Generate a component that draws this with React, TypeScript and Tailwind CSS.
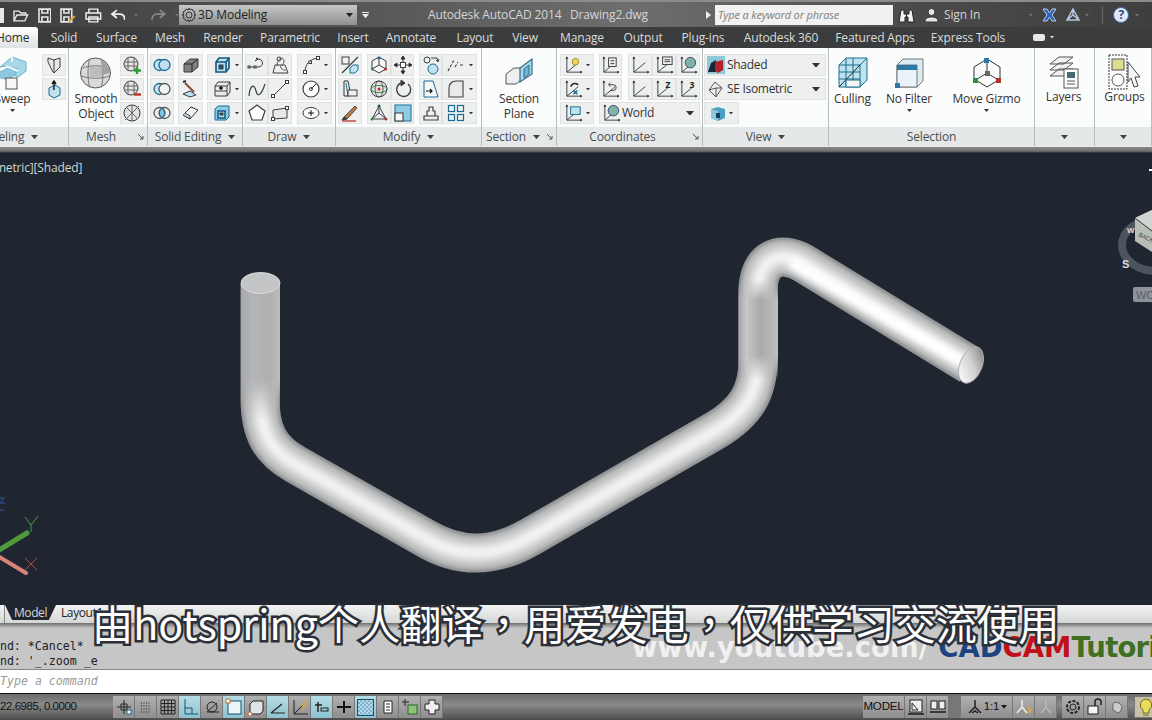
import React from 'react';

const Svg: React.FC<{ s?: number; w?: number; h?: number; vb?: string; children: React.ReactNode }> = ({ s = 20, w, h, vb = '0 0 20 20', children }) => (
  <svg width={w ?? s} height={h ?? s} viewBox={vb} fill="none" stroke="#3c3f42" strokeWidth={1} className="shrink-0">
    {children}
  </svg>
);

const blue = '#1b6a96';
const pale = '#bfe2ee';

// ribbon icons, small ones are 20x20 in their own box
const ic: Record<string, React.ReactNode> = {
  slice: <><path d="M4 3l6 2 6-2v9l-6 6-1-1-5-10z" fill="#e8e8e8" /><path d="M10 5v13" /></>,
  press: <><path d="M5 9l6-3 5 3v7l-6 3-5-3z" fill={pale} stroke={blue} /><path d="M10 11V2M8 5l2-3 2 3" stroke="#111" strokeWidth={1.4} /></>,
  meshAdd: <><ellipse cx="9" cy="9" rx="7" ry="7" fill="#e4e4e4" /><path d="M2 7h14M2 11h14M6 2v14M12 2v14" stroke="#666" /><path d="M15 12v7M12 15.500h7" stroke="#2d9b35" strokeWidth={2.4} /></>,
  meshSub: <><ellipse cx="9" cy="9" rx="7" ry="7" fill="#e4e4e4" /><path d="M2 7h14M2 11h14M6 2v14M12 2v14" stroke="#666" /><path d="M12 15.500h7" stroke="#b5312b" strokeWidth={2.4} /></>,
  meshCut: <><ellipse cx="10" cy="10" rx="8" ry="8" fill="#e2e2e2" /><path d="M3 17L17 3M5 5l10 10M10 2v16" stroke="#666" /></>,
  union: <><circle cx="7.500" cy="10" r="5.500" fill={pale} stroke={blue} strokeWidth={1.3} /><circle cx="12.500" cy="10" r="5.500" fill={pale} stroke={blue} strokeWidth={1.3} /></>,
  subtract: <><circle cx="7.500" cy="10" r="5.500" fill={pale} stroke={blue} strokeWidth={1.3} /><circle cx="12.500" cy="10" r="5.500" fill="#f3f5f5" stroke="#555" strokeWidth={1.3} /></>,
  intersect: <><circle cx="7.500" cy="10" r="5.500" stroke="#555" strokeWidth={1.3} /><circle cx="12.500" cy="10" r="5.500" stroke="#555" strokeWidth={1.3} /><path d="M10 5.400a5.500 5.500 0 010 9.200 5.500 5.500 0 010-9.200z" fill="#88c6dd" stroke={blue} /></>,
  boxGrey: <><path d="M3 9l6-5h8v8l-6 5H3z" fill="#7d7f80" /><path d="M3 9h8v8M11 9l6-5" stroke="#222" /></>,
  boxBlue: <><path d="M4 7l3-4h10v10l-3 4H4z" fill={pale} stroke="#12577f" strokeWidth={1.6} /><path d="M4 7h10v10M14 7l3-4" stroke="#12577f" strokeWidth={1.6} /><rect x="7" y="10" width="4" height="4" fill="#12577f" /></>,
  brush: <><path d="M2 15l7-3 6 4-6 2z" fill={pale} /><path d="M4 4l9 9" stroke="#8a4a32" strokeWidth={2} /><path d="M2 3l3-1" stroke="#333" strokeWidth={2} /></>,
  boxPlus: <><path d="M3 7l3-4h12v10l-3 4H3z" fill="#eaeaea" /><path d="M3 7h12v10M15 7l3-4M3 12h12" /><path d="M7 9h4M9 7v4" stroke="#111" strokeWidth={1.4} /></>,
  eraser: <><path d="M2 12l8-8 7 3-8 9z" fill="#f2f2f2" stroke="#333" /><path d="M2 12l7 4v-3l-5-3" fill={pale} /></>,
  boxInset: <><path d="M3 6l3-3h11v11l-3 3H3z" fill="#8ccde2" stroke={blue} /><rect x="6" y="8" width="7" height="7" fill={pale} stroke="#12577f" strokeWidth={1.5} /><rect x="8" y="10" width="3" height="2" fill="#12577f" /></>,
  spline2: <><path d="M2 12h5M11 4c6 0 6 8 0 8H9" /><rect x="1" y="11" width="2" height="2" /><rect x="7" y="11" width="2" height="2" /><path d="M8 6l3-2-2-1" stroke="#111" /></>,
  hatch: <><path d="M3 18l2-8h10l3 8z" fill="#eee" /><path d="M7 11c0-8 7-10 7-5s-5 4-3 7 5 2 5 2" stroke="#555" /><circle cx="9" cy="4" r="2" /></>,
  arc: <><path d="M4 17C4 9 9 4 17 3" /><rect x="2.500" y="15.500" width="3" height="3" fill="#fff" /><rect x="8" y="6" width="2.500" height="2.500" fill="#fff" /><rect x="15.500" y="1.500" width="3" height="3" fill="#fff" /></>,
  wave: <path d="M2 17C3 6 7 4 9 12s6 2 9-7" strokeWidth={1.2} />,
  line: <><path d="M3 17L17 3" /><rect x="1.500" y="15.500" width="3" height="3" fill="#fff" /><rect x="15.500" y="1.500" width="3" height="3" fill="#fff" /></>,
  circle: <><circle cx="10" cy="10" r="8" fill="#fdfdfd" strokeWidth={1.2} /><circle cx="10" cy="10" r="1.500" /><path d="M10 10l5-5" /></>,
  penta: <path d="M10 2l8 6-3 9H5L2 8z" fill="#fdfdfd" strokeWidth={1.2} />,
  rect: <><path d="M3 7l14-2v10l-14 1z" fill="#e8e8e8" /><rect x="15.500" y="3.500" width="3" height="3" fill="#fff" /><rect x="1.500" y="14.500" width="3" height="3" fill="#fff" /></>,
  ellipse: <><ellipse cx="10" cy="10" rx="8" ry="5.500" fill="#fdfdfd" /><path d="M7 10h6M10 7v6" stroke="#111" /></>,
  scale: <><rect x="2" y="2" width="7" height="7" fill="#f0f0f0" /><path d="M2 18L18 2" strokeWidth={1.2} /><path d="M10 13l3-3h5v5l-3 3h-5z" fill={pale} stroke={blue} /></>,
  gizmoBox: <><path d="M10 2l7 4v8l-7 4-7-4V6z" fill="#f5f5f5" /><path d="M10 10V2M10 10l-7 4M10 10l7 4" /><circle cx="10" cy="3" r="1.600" fill={blue} stroke="none" /><circle cx="3.500" cy="14" r="1.600" fill="#2d8f3c" stroke="none" /><circle cx="16.500" cy="14" r="1.600" fill="#b5312b" stroke="none" /></>,
  move: <><path d="M10 1v18M1 10h18" strokeWidth={1.2} /><path d="M8 4l2-3 2 3zM8 16l2 3 2-3zM4 8l-3 2 3 2zM16 8l3 2-3 2z" fill="#111" /><rect x="7.500" y="7.500" width="5" height="5" fill="#fff" /></>,
  rot: <><circle cx="6" cy="5" r="3" /><circle cx="12" cy="14" r="5" fill={pale} stroke={blue} /><path d="M10 3h6l1 3M15 5l2 2 1-3" /></>,
  chain: <path d="M2 16L8 5M9 12l3-5M14 10h4" strokeWidth={1.1} strokeDasharray="3 1.500" />,
  stretch: <><path d="M4 2v15h5M4 2h4l2 10" stroke="#333" /><path d="M6 4l2 13" stroke={blue} /><rect x="8" y="11" width="9" height="6" fill="#f0f0f0" /></>,
  sphereGrid: <><circle cx="10" cy="10" r="8" fill="#e8e0e8" /><ellipse cx="10" cy="10" rx="4" ry="8" stroke="#555" /><ellipse cx="10" cy="10" rx="8" ry="3.500" stroke="#2d8f3c" /><circle cx="10" cy="10" r="1.500" fill="#b5312b" stroke="none" /></>,
  rotate: <><path d="M15 5a7 7 0 11-7-1" strokeWidth={1.4} /><path d="M8 1v6l4-3z" fill="#333" /></>,
  trap: <><path d="M3 2h9l5 16H3z" fill="#f5f7f7" stroke={blue} /><path d="M5 12h6M9 10l2 2-2 2" stroke="#111" strokeWidth={1.2} /></>,
  quarter: <path d="M3 18V9c0-4 3-7 7-7h7v16z" fill="#e8eaea" strokeWidth={1.1} />,
  pencil: <><path d="M4 14L15 3l2 2L7 16z" fill="#b47a52" stroke="#6e4a33" /><path d="M2 18h14" stroke="#b5312b" strokeWidth={1.3} /><path d="M2 17l2-3 3 2z" fill="#333" /></>,
  tri: <><path d="M10 3l7 13H3z" /><path d="M10 3v7M3 16l7-6 7 6" /><circle cx="10" cy="3" r="1.500" fill="#1d5b38" stroke="none" /><circle cx="3" cy="16" r="1.500" fill="#2d8f3c" stroke="none" /><circle cx="17" cy="16" r="1.500" fill="#b5312b" stroke="none" /></>,
  overlap: <><rect x="2" y="2" width="16" height="16" fill="#8ccde2" stroke={blue} /><rect x="2" y="10" width="8" height="8" fill="#f8f8f8" stroke="#333" /></>,
  clover: <path d="M3 17h14v-4h-3V8h-2V4H8v4H6v5H3zM6 13h8" strokeWidth={1.2} />,
  grid4: <g stroke={blue} strokeWidth={1.2}><rect x="2.500" y="2.500" width="6" height="6" /><rect x="11.500" y="2.500" width="6" height="6" /><rect x="2.500" y="11.500" width="6" height="6" /><rect x="11.500" y="11.500" width="6" height="6" /></g>,
};

// little UCS axes with something sitting in the corner
const Ucs: React.FC<{ children?: React.ReactNode }> = ({ children }) => (
  <Svg s={19}>
    <path d="M3 1v16h16M3 17L15 7" />
    <path d="M2 3l1-2 1 2M17 16l2 1-2 1" fill="#333" />
    {children}
  </Svg>
);

const Caret: React.FC<{ c?: string; w?: number }> = ({ c = '#333', w = 5 }) => (
  <svg width={w} height={w * 0.6} viewBox="0 0 5 3" className="shrink-0"><path d="M0 0h5L2.500 3z" fill={c} /></svg>
);

const Launcher = () => (
  <svg width="6" height="6" viewBox="0 0 6 6" className="shrink-0"><path d="M0 0l5 5M5 2v3H2" stroke="#555" fill="none" /></svg>
);

const Cell: React.FC<{ w?: number; children?: React.ReactNode }> = ({ w = 24, children }) => (
  <div style={{ width: w }} className="h-[22px] shrink-0 flex items-center justify-center gap-[3px] bg-[#eef0f0] border border-[#e1e3e3]">
    {children}
  </div>
);

const Col: React.FC<{ children: React.ReactNode }> = ({ children }) => <div className="flex flex-col gap-[2px]">{children}</div>;

const Combo: React.FC<{ w: number; icon: React.ReactNode; label: string }> = ({ w, icon, label }) => (
  <div style={{ width: w }} className="h-[22px] flex items-center pl-[2px] pr-[5px] gap-[1px] bg-[#eef0f0] border border-[#e1e3e3] text-[12px] tracking-[-0.3px] text-[#333]">
    {icon}
    <span className="flex-1 truncate">{label}</span>
    <Caret w={8} />
  </div>
);

const Big: React.FC<{ w: number; icon: React.ReactNode; lines: string[]; caret?: boolean; h?: number; dx?: number }> = ({ w, icon, lines, caret, h = 37, dx = 0 }) => (
  <div style={{ width: w, marginLeft: dx }} className="shrink-0 flex flex-col items-center text-[12px] leading-[15px] text-[#333]">
    <div style={{ height: h }} className="flex items-center justify-center">{icon}</div>
    {lines.map((l) => <span key={l} className="whitespace-nowrap">{l}</span>)}
    {caret && <div className="mt-[3px]"><Caret w={5} /></div>}
  </div>
);

const Panel: React.FC<{ w: number; label?: string; caret?: boolean; launch?: boolean; shift?: number; pr?: number; children: React.ReactNode; gap?: number; pl?: number }> = ({ w, label, caret, launch, shift = 0, pr = 0, children, gap = 0, pl = 0 }) => (
  <div style={{ width: w }} className="shrink-0 flex flex-col border-r border-[#b9bcbc] overflow-hidden">
    <div style={{ gap, paddingLeft: pl }} className="h-[79px] pt-[6px] flex bg-[#fbfcfc]">{children}</div>
    <div style={{ marginLeft: shift, paddingRight: pr }} className="relative h-[19px] pt-[1px] flex items-center justify-center gap-[7px] bg-[#e5e8e8] text-[12px] text-[#4b4e50]">
      {label && <span className="whitespace-nowrap">{label}</span>}
      {caret && <Caret w={7} c="#444" />}
      {launch && <div className="absolute right-[3px] top-[7px]"><Launcher /></div>}
    </div>
  </div>
);

const tabs: [string, number][] = [
  ['Solid', 52], ['Surface', 53], ['Mesh', 54], ['Render', 52], ['Parametric', 82], ['Insert', 44], ['Annotate', 72], ['Layout', 56],
  ['View', 44], ['Manage', 70], ['Output', 52], ['Plug-ins', 68], ['Autodesk 360', 88], ['Featured Apps', 100], ['Express Tools', 86],
];

const TitleBar = () => (
  <div className="h-[27px] flex items-center pt-[1px] border-t-2 border-[#8b8b8b] bg-[linear-gradient(90deg,#3f3f3f,#5a5a5a_35%,#6e6e6e_55%,#4a4a4a_80%,#3f3f3f)] text-[#d5d5d5] text-[12px]">
    <div className="w-[179px] flex items-center gap-[9px] shrink-0">
      <div className="w-[4px] h-[15px] bg-[#e8e8e8]" />
      <svg width="16" height="15" viewBox="0 0 16 15" fill="none" stroke="#e8e8e8" strokeWidth="1.400"><path d="M1 13V3h5l2 2h5v2M1 13l3-6h11l-3 6z" /></svg>
      <svg width="14" height="15" viewBox="0 0 14 15" fill="none" stroke="#e8e8e8" strokeWidth="1.600"><path d="M1 1h12v13H1zM4 1v4h6V1M4 14V9h6v5" /></svg>
      <svg width="16" height="15" viewBox="0 0 16 15" fill="none" stroke="#e8e8e8" strokeWidth="1.600"><path d="M1 1h11v13H1zM4 1v4h5V1M4 14V9h5v5" /><path d="M9 14l6-6" stroke="#e0a63c" strokeWidth="2" /></svg>
      <svg width="17" height="15" viewBox="0 0 17 15" fill="none" stroke="#eee" strokeWidth="1.500"><path d="M4 5V1h9v4M1 5h15v6H1zM4 9h9v5H4z" /></svg>
      <svg width="15" height="13" viewBox="0 0 15 13" fill="none" stroke="#eee" strokeWidth="1.800"><path d="M6 1L1 5l5 4M1 5h8c3 0 5 2 5 6" /></svg>
      <Caret c="#777" w={4} />
      <svg className="ml-[4px]" width="15" height="13" viewBox="0 0 15 13" fill="none" stroke="#888" strokeWidth="1.800"><path d="M9 1l5 4-5 4M14 5H6c-3 0-5 2-5 6" /></svg>
      <Caret c="#777" w={4} />
    </div>
    <div className="w-[178px] h-[20px] shrink-0 flex items-center bg-[linear-gradient(#c7c7c7,#8f8f8f)] pl-[2px] pr-[4px] text-[#222]">
      <svg width="16" height="16" viewBox="0 0 16 16" fill="none" stroke="#333"><circle cx="8" cy="8" r="3" /><path d="M8 1l1 2 2-1 1 2 2 1-1 2 2 1-2 1 1 2-2 1-1 2-2-1-1 2-1-2-2 1-1-2-2-1 1-2-2-1 2-1-1-2 2-1 1-2 2 1z" /></svg>
      <span className="flex-1 pl-[1px]">3D Modeling</span>
      <Caret c="#222" w={7} />
    </div>
    <div className="ml-[4px] flex flex-col items-center gap-[1px] w-[9px]"><div className="w-[7px] h-[1px] bg-[#eee]" /><Caret c="#eee" w={7} /></div>
    <span className="ml-[58px] w-[142px] whitespace-nowrap">Autodesk AutoCAD 2014</span>
    <span className="w-[78px] whitespace-nowrap">Drawing2.dwg</span>
    <div className="ml-[58px] w-0 h-0 border-y-[4px] border-y-transparent border-l-[5px] border-l-[#eee]" />
    <div className="ml-[4px] w-[178px] h-[20px] bg-[#f1f1f1] pl-[3px] pt-[1px] flex items-center italic text-[11px] text-[#808080]">Type a keyword or phrase</div>
    <svg className="ml-[5px]" width="17" height="15" viewBox="0 0 17 15" fill="#f2f2f2" stroke="#222"><path d="M1 14l1-6 1-6h3v4h5V2h3l1 6 1 6h-6V9H7v5z" /><path d="M8.500 6v3" /></svg>
    <svg className="ml-[9px]" width="15" height="16" viewBox="0 0 15 16" fill="#e5e5e5" stroke="#333"><circle cx="7.500" cy="5" r="3.500" /><path d="M1 15c0-4 3-5 6.500-5S14 11 14 15z" /></svg>
    <span className="ml-[5px]">Sign In</span>
    <div className="ml-[49px]"><Caret c="#777" w={4} /></div>
    <svg className="ml-[9px]" width="15" height="14" viewBox="0 0 15 14" fill="#2a63b8" stroke="#bcd"><path d="M1 1h4l2.500 4L10 1h4l-4 6 4 6h-4L7.500 9 5 13H1l4-6z" /></svg>
    <svg className="ml-[8px]" width="16" height="14" viewBox="0 0 16 14" fill="none" stroke="#b8c4e0" strokeWidth="1.500"><path d="M8 1l6 11H2zM8 1v6M2 12l6-5 6 5" /></svg>
    <div className="ml-[4px]"><Caret c="#777" w={4} /></div>
    <div className="ml-[13px] w-[1px] h-[18px] bg-[#666]" />
    <div className="ml-[10px] w-[16px] h-[16px] rounded-full bg-[#dfe8f4] border border-[#3868a8] flex items-center justify-center text-[#28508e] font-bold text-[12px]">?</div>
    <div className="ml-[6px]"><Caret c="#777" w={4} /></div>
  </div>
);

const TabBar = () => (
  <div className="h-[21px] flex bg-[#3b3c3d] text-[12px] text-[#dcdcdc]">
    <div className="w-[38px] bg-[linear-gradient(#fff,#dfe3e3)] rounded-tr-[3px] text-[#2c2c2c] overflow-hidden leading-[21px]"><span className="-ml-[4px] block">Home</span></div>
    {tabs.map(([t, w]) => (
      <div key={t} style={{ width: w }} className="text-center leading-[21px] whitespace-nowrap">{t}</div>
    ))}
    <div className="ml-[22px] flex items-center gap-[5px]">
      <div className="w-[12px] h-[7px] rounded-[2px] bg-[#e8e8e8]" />
      <Caret c="#ddd" w={4} />
    </div>
  </div>
);

const Ribbon = () => (
  <div className="h-[98px] flex bg-[#f8f9f9]">
    <Panel w={69} label="Modeling" caret shift={-56} gap={17}>
      <Big w={25} lines={['Sweep']} caret icon={
        <svg width="30" height="36" viewBox="0 0 30 36" className="shrink-0">
          <path d="M2 12L14 2l14 5v9l-8 6-7-3 7-5L8 11z" fill="#a6d8ea" stroke="#6fb0ca" />
          <path d="M0 18l10-5 9 5-9 7-10-3z" fill="#8cc8e0" stroke="#6fb0ca" />
          <path d="M8 11l12 5M14 2l0 5" stroke="#e8f6fb" fill="none" strokeWidth="2" />
          <rect x="8" y="23" width="11" height="11" fill="#f5f7f7" stroke="#555" />
        </svg>
      } />
      <Col>
        <Cell>{<Svg>{ic.slice}</Svg>}</Cell>
        <Cell><Svg>{ic.press}</Svg></Cell>
      </Col>
    </Panel>

    <Panel w={79} label="Mesh" launch pr={14} pl={3}>
      <Big w={48} lines={['Smooth', 'Object']} icon={
        <svg width="33" height="34" viewBox="0 0 32 34" className="shrink-0 -ml-[2px]">
          <circle cx="16" cy="17" r="15" fill="#dadada" stroke="#555" />
          <path d="M3 12c8-3 18-3 26 0M2 20c8 3 20 3 28 0M10 3c-2 8-2 20 0 28M22 3c2 8 2 20 0 28" stroke="#777" fill="none" />
          <path d="M10 11h12v10H10z" fill="#bdbdbd" />
          <path d="M22 4c5 3 8 8 8 13l-8 2z" fill="#a2a2a2" />
        </svg>
      } />
      <Col>
        <Cell><Svg>{ic.meshAdd}</Svg></Cell>
        <Cell><Svg>{ic.meshSub}</Svg></Cell>
        <Cell><Svg>{ic.meshCut}</Svg></Cell>
      </Col>
    </Panel>

    <Panel w={95} label="Solid Editing" caret pl={2} gap={4}>
      <Col>
        <Cell><Svg>{ic.union}</Svg></Cell>
        <Cell><Svg>{ic.subtract}</Svg></Cell>
        <Cell><Svg>{ic.intersect}</Svg></Cell>
      </Col>
      <Col>
        <Cell w={25}><Svg>{ic.boxGrey}</Svg></Cell>
        <Cell w={25}><Svg>{ic.brush}</Svg></Cell>
        <Cell w={25}><Svg>{ic.eraser}</Svg></Cell>
      </Col>
      <Col>
        <Cell w={36}><Svg>{ic.boxBlue}</Svg><Caret w={4} /></Cell>
        <Cell w={36}><Svg>{ic.boxPlus}</Svg><Caret w={4} /></Cell>
        <Cell w={36}><Svg>{ic.boxInset}</Svg><Caret w={4} /></Cell>
      </Col>
    </Panel>

    <Panel w={93} label="Draw" caret pl={2}>
      <Col>
        <Cell w={23}><Svg>{ic.spline2}</Svg></Cell>
        <Cell w={23}><Svg>{ic.wave}</Svg></Cell>
        <Cell w={23}><Svg>{ic.penta}</Svg></Cell>
      </Col>
      <Col>
        <Cell><Svg>{ic.hatch}</Svg></Cell>
        <Cell><Svg>{ic.line}</Svg></Cell>
        <Cell><Svg>{ic.rect}</Svg></Cell>
      </Col>
      <div className="w-[5px]" />
      <Col>
        <Cell w={35}><Svg>{ic.arc}</Svg><Caret w={4} /></Cell>
        <Cell w={35}><Svg>{ic.circle}</Svg><Caret w={4} /></Cell>
        <Cell w={35}><Svg>{ic.ellipse}</Svg><Caret w={4} /></Cell>
      </Col>
    </Panel>

    <Panel w={146} label="Modify" caret pl={2}>
      <Col>
        <Cell><Svg>{ic.scale}</Svg></Cell>
        <Cell><Svg>{ic.stretch}</Svg></Cell>
        <Cell><Svg>{ic.pencil}</Svg></Cell>
      </Col>
      <div className="w-[5px]" />
      <Col>
        <Cell><Svg>{ic.gizmoBox}</Svg></Cell>
        <Cell><Svg>{ic.sphereGrid}</Svg></Cell>
        <Cell><Svg>{ic.tri}</Svg></Cell>
      </Col>
      <Col>
        <Cell w={23}><Svg>{ic.move}</Svg></Cell>
        <Cell w={23}><Svg>{ic.rotate}</Svg></Cell>
        <Cell w={23}><Svg>{ic.overlap}</Svg></Cell>
      </Col>
      <div className="w-[5px]" />
      <Col>
        <Cell w={23}><Svg>{ic.rot}</Svg></Cell>
        <Cell w={23}><Svg>{ic.trap}</Svg></Cell>
        <Cell w={23}><Svg>{ic.clover}</Svg></Cell>
      </Col>
      <Col>
        <Cell w={35}><Svg>{ic.chain}</Svg><Caret w={4} /></Cell>
        <Cell w={35}><Svg>{ic.quarter}</Svg><Caret w={4} /></Cell>
        <Cell w={35}><Svg>{ic.grid4}</Svg><Caret w={4} /></Cell>
      </Col>
    </Panel>

    <Panel w={75} label="Section" caret launch pr={12}>
      <Big w={74} lines={['Section', 'Plane']} icon={
        <svg width="30" height="32" viewBox="0 0 30 32" className="shrink-0 mt-[2px]" fill="none">
          <path d="M2 16l8-6h10v10l-8 6H2z" fill="#eee" stroke="#555" />
          <path d="M16 24V10l12-9v15z" fill="#a6d8ea" stroke="#356c8a" strokeWidth="1.200" />
          <path d="M20 20V11l5-4v9z" fill="#6fb4d0" stroke="#356c8a" />
        </svg>
      } />
    </Panel>

    <Panel w={146} label="Coordinates" launch pr={14} pl={3}>
      <div className="flex flex-col gap-[2px]">
        <div className="flex">
          <Cell w={34}><Ucs><circle cx="12" cy="6" r="3.500" fill="#f0d460" stroke="#a88b1f" /></Ucs><Caret w={4} /></Cell>
          <div className="w-[5px]" />
          <Cell w={23}><Ucs><rect x="8" y="2" width="8" height="9" fill="#eee" /><path d="M10 5h4M10 8h4" /></Ucs></Cell>
          <div className="w-[6px]" />
          <Cell><Ucs /></Cell>
          <Cell><Ucs><rect x="8" y="1" width="10" height="8" fill="#eee" /><path d="M10 4h6M10 6h6" /></Ucs></Cell>
          <Cell><Ucs><circle cx="12" cy="7" r="5.500" fill="#7fb3a8" stroke="#346" /></Ucs></Cell>
        </div>
        <div className="flex">
          <Cell w={34}><Ucs><path d="M7 7c2-4 5-4 8-2" stroke="#222" strokeWidth={1.600} /><path d="M10 11l4 4M14 11l-4 4" stroke={blue} strokeWidth={1.600} /></Ucs><Caret w={4} /></Cell>
          <div className="w-[5px]" />
          <Cell w={23}><Ucs><path d="M8 5h5a3 3 0 010 6h-3M8 5l2-2M8 5l2 2" /></Ucs></Cell>
          <div className="w-[6px]" />
          <Cell><Ucs /></Cell>
          <Cell><Ucs><text x="11" y="8" fontSize="9" fontWeight="700" fill="#222" stroke="none">Z</text></Ucs></Cell>
          <Cell><Ucs><text x="11" y="8" fontSize="9" fontWeight="700" fill="#222" stroke="none">3</text></Ucs></Cell>
        </div>
        <div className="flex">
          <Cell w={34}><Ucs><rect x="7" y="3" width="10" height="8" fill={pale} stroke={blue} /></Ucs><Caret w={4} /></Cell>
          <div className="w-[5px]" />
          <Combo w={101} label="World" icon={<Ucs><circle cx="12" cy="7" r="5.500" fill="#7fb3a8" stroke="#346" /></Ucs>} />
        </div>
      </div>
    </Panel>

    <Panel w={126} label="View" caret pl={1}>
      <div className="flex flex-col gap-[2px]">
        <Combo w={122} label="Shaded" icon={
          <svg width="18" height="18" viewBox="0 0 18 18" className="shrink-0 mr-[1px]">
            <rect width="18" height="18" fill="#8ec9d8" />
            <path d="M1 16l3-9 5-3v12z" fill="#182838" />
            <path d="M8 6l8-2v10l-5 3-3-3z" fill="#b3202a" />
          </svg>
        } />
        <Combo w={122} label="SE Isometric" icon={
          <svg width="17" height="17" viewBox="0 0 17 17" fill="#f0f0f0" stroke="#555" className="shrink-0 mr-[2px]">
            <path d="M8 1l7 6-6 9-7-7z" /><path d="M2 9l7-2 6 0M9 7v9" fill="none" />
          </svg>
        } />
        <Cell w={35}>
          <svg width="16" height="15" viewBox="0 0 16 15" className="shrink-0">
            <path d="M1 3l7-2 7 2v9l-7 3-7-3z" fill="#4f9fc4" /><path d="M8 5v10L1 12V3z" fill="#8cc8e0" /><rect x="6" y="7" width="4" height="5" fill="#17405a" />
          </svg>
          <Caret w={4} />
        </Cell>
      </div>
    </Panel>

    <Panel w={206} label="Selection">
      <Big w={49} dx={-1} lines={['Culling']} icon={
        <svg width="30" height="33" viewBox="0 0 30 33" fill="none" stroke="#1f6d92" className="shrink-0">
          <path d="M1 9l7-7h21v22l-7 7H1z" fill="#bfe2ee" />
          <path d="M1 9h21v22M22 9l7-7M8 9v22M15 9v22M1 16h21M1 23h21M8 2v7M15 2v7" />
          <path d="M1 31L22 9" stroke="#222" />
          <path d="M8 24h14v7H8z" fill="#f5f7f7" />
        </svg>
      } />
      <Big w={64} lines={['No Filter']} caret icon={
        <svg width="30" height="32" viewBox="0 0 30 32" className="shrink-0">
          <path d="M3 8l6-6h20v22l-6 6H3z" fill="#dcecf2" stroke="#777" />
          <path d="M3 8h20v22H3z" fill="#eaf4f8" stroke="#777" />
          <path d="M3 8h20v5H3z" fill="#2b7aa5" />
          <rect x="1" y="26" width="5" height="5" fill="#2b7aa5" />
        </svg>
      } />
      <Big w={93} dx={-1} lines={['Move Gizmo']} caret icon={
        <svg width="30" height="32" viewBox="0 0 30 32" fill="none" stroke="#333" className="shrink-0">
          <path d="M15 2l13 8v12l-13 8-13-8V10zM15 16V2M15 16L2 24M15 16l13 8" />
          <rect x="12" y="1" width="5" height="5" fill="#2b7aa5" stroke="none" />
          <rect x="13" y="14" width="5" height="5" fill="#666" stroke="none" />
          <rect x="1" y="21" width="5" height="5" fill="#2d8f3c" stroke="none" />
          <rect x="24" y="21" width="5" height="5" fill="#b5312b" stroke="none" />
        </svg>
      } />
    </Panel>

    <Panel w={60} caret>
      <Big w={59} dx={-1} h={35} lines={['Layers']} icon={
        <svg width="31" height="34" viewBox="0 0 31 34" fill="#f2f2f2" stroke="#555" className="shrink-0">
          <path d="M2 9l9-7h14l-9 7zM2 15l9-7h14l-9 7zM2 21l9-7h14l-9 7z" />
          <rect x="16" y="14" width="14" height="19" fill="#fff" />
          <rect x="19" y="17" width="8" height="6" fill="#486878" stroke="none" />
          <path d="M19 26h8M19 29h8" />
        </svg>
      } />
    </Panel>

    <Panel w={57} caret>
      <Big w={57} dx={1} h={35} lines={['Groups']} icon={
        <svg width="34" height="36" viewBox="0 0 34 36" fill="none" className="shrink-0">
          <rect x="1" y="1" width="18" height="34" stroke="#333" strokeDasharray="2 1" />
          <rect x="4" y="5" width="12" height="11" fill="#dddd90" stroke="#555" />
          <circle cx="10" cy="26" r="6" fill="#fdfdfd" stroke="#555" />
          <path d="M20 8l12 15-5 0 3 9-4 1-3-9-3 4z" fill="#f5f5f5" stroke="#444" />
        </svg>
      } />
    </Panel>
  </div>
);

const Viewport = () => (
  <div className="relative h-[452px] bg-[#1f2630] overflow-hidden">
    <svg width="1152" height="452" viewBox="0 153 1152 452" className="block">
      <defs>
        <path id="pipe" d="M260 284V398C260 432 270 450 295 464L425 538C462 560 497 556 530 537L716 430C746 412 758 392 758 360V292C758 258 780 250 803 263L970 365" fill="none" strokeLinejoin="round" />
        <path id="armRight" d="M790 262L962 362" fill="none" />
        <filter id="hair" x="-10%" y="-10%" width="120%" height="120%"><feGaussianBlur stdDeviation="0.600" /></filter>
        <filter id="soft" x="-10%" y="-10%" width="120%" height="120%"><feGaussianBlur stdDeviation="3" /></filter>
        <filter id="softer" x="-10%" y="-10%" width="120%" height="120%"><feGaussianBlur stdDeviation="1.500" /></filter>
        <linearGradient id="vert" x1="0" x2="1" y1="0" y2="0">
          <stop offset="0" stopColor="#a6a8a9" /><stop offset="0.3" stopColor="#b4b5b6" /><stop offset="0.75" stopColor="#aeafb0" /><stop offset="1" stopColor="#bcbcbc" />
        </linearGradient>
        <linearGradient id="vert2" x1="0" x2="1" y1="0" y2="0">
          <stop offset="0" stopColor="#a2a4a5" /><stop offset="0.2" stopColor="#c8c8c8" /><stop offset="0.55" stopColor="#a8a9aa" /><stop offset="1" stopColor="#c0c0c0" />
        </linearGradient>
        <linearGradient id="fade1" gradientUnits="userSpaceOnUse" x1="0" x2="0" y1="380" y2="420">
          <stop offset="0" stopColor="#fff" /><stop offset="1" stopColor="#000" />
        </linearGradient>
        <linearGradient id="fade2" gradientUnits="userSpaceOnUse" x1="0" x2="0" y1="280" y2="380">
          <stop offset="0" stopColor="#000" /><stop offset="0.2" stopColor="#fff" /><stop offset="0.75" stopColor="#fff" /><stop offset="1" stopColor="#000" />
        </linearGradient>
        <mask id="m1" maskUnits="userSpaceOnUse" x="230" y="270" width="60" height="160"><rect x="230" y="270" width="60" height="160" fill="url(#fade1)" /></mask>
        <mask id="m2" maskUnits="userSpaceOnUse" x="730" y="270" width="60" height="120"><rect x="730" y="270" width="60" height="120" fill="url(#fade2)" /></mask>
        <linearGradient id="cap" x1="0.8" x2="0.2" y1="0" y2="1">
          <stop offset="0" stopColor="#7f8182" /><stop offset="0.45" stopColor="#cfcfcf" /><stop offset="1" stopColor="#ffffff" />
        </linearGradient>
      </defs>

      {/* tube built from stacked strokes */}
      <use href="#pipe" stroke="#8f9193" strokeWidth="39" filter="url(#hair)" />
      <use href="#pipe" stroke="#b6b7b8" strokeWidth="33" filter="url(#softer)" />
      <use href="#pipe" stroke="#d8d8d8" strokeWidth="22" filter="url(#soft)" />
      <use href="#pipe" stroke="#f6f6f6" strokeWidth="9" filter="url(#soft)" />
      <use href="#armRight" stroke="#ffffff" strokeWidth="12" filter="url(#soft)" />
      <rect x="241" y="283" width="39" height="140" fill="url(#vert)" mask="url(#m1)" />
      <rect x="738.500" y="280" width="39.500" height="100" fill="url(#vert2)" mask="url(#m2)" />
      <ellipse cx="260.500" cy="283" rx="19.500" ry="10.500" fill="#c4c5c6" stroke="#dcdcdc" />
      <ellipse cx="971" cy="365" rx="11" ry="19" transform="rotate(22 971 365)" fill="url(#cap)" stroke="#b0b0b0" />

      {/* UCS icon */}
      <path d="M-4 552L27 533" stroke="#4f9a3f" strokeWidth="5" strokeLinecap="round" />
      <path d="M-4 555L26 573" stroke="#d8827a" strokeWidth="4" strokeLinecap="round" />
      <path d="M25 517l6 8 7-9M31 525v7" stroke="#4f9a3f" fill="none" />
      <path d="M25 558l12 12M37 558l-12 12" stroke="#a84a45" fill="none" />
      <path d="M0 498h4l-4 5h5M0 510h4" stroke="#2c5aa0" fill="none" />

      {/* view cube, cut off by the window edge */}
      <ellipse cx="1156" cy="245" rx="34" ry="26" fill="none" stroke="#4d545d" strokeWidth="8" />
      <path d="M1135 218l17-8v42l-17-11z" fill="#b8bdb8" />
      <path d="M1135 218l17 13v-21z" fill="#d0d3cf" />
      <path d="M1135 218l17 13" stroke="#333" />
      <text x="1138" y="236" fontSize="6" fontFamily="Liberation Sans, sans-serif" fill="#444" transform="rotate(25 1138 236)">BACK</text>
      <text x="1122" y="268" fontSize="11" fontWeight="700" fontFamily="Liberation Sans, sans-serif" fill="#d8dce0">S</text>
      <text x="1127" y="233" fontSize="8" fontWeight="700" fontFamily="Liberation Sans, sans-serif" fill="#d8dce0">W</text>
      <rect x="1133" y="287" width="24" height="15" rx="2" fill="#8e939a" />
      <text x="1136" y="299" fontSize="11" fontFamily="Liberation Sans, sans-serif" fill="#5a5f66">WCS</text>
      <path d="M1149 170h3" stroke="#fff" strokeWidth="2" />
    </svg>
    <div className="absolute left-[-36px] top-[6px] text-[12px] text-[#d4d6d8] whitespace-nowrap">[-][Isometric][Shaded]</div>
  </div>
);

const LayoutTabs = () => (
  <>
    <div className="h-[18px] flex bg-[linear-gradient(#f2f3f3,#d5d6d6)] text-[12px] tracking-[-0.4px]">
      <div className="w-[5px] border-r border-[#888]" />
      <div className="w-[51px] h-[15px] bg-[#1f2630] text-[#d8d8d8] flex items-center justify-center [clip-path:polygon(0_0,100%_0,86%_100%,14%_100%)]">Model</div>
      <div className="ml-[5px] w-[46px] h-[16px] text-[#222] flex items-center">Layout1</div>
    </div>
    <div className="h-[5px] bg-[linear-gradient(#6f6f6f,#c2c2c2)]" />
  </>
);

const CommandArea = () => (
  <>
    <div className="h-[42px] bg-[#c6c6c6] font-['DejaVu_Sans_Mono','Liberation_Mono',monospace] text-[11.600px] tracking-normal leading-[15px] text-[#222] pt-[11px] border-b border-[#888] whitespace-nowrap">
      <div className="-ml-[35px]">Command: *Cancel*</div>
      <div className="-ml-[35px]">Command: '_.zoom _e</div>
    </div>
    <div className="h-[23px] pt-[1px] bg-white flex items-center font-['DejaVu_Sans_Mono','Liberation_Mono',monospace] italic tracking-normal text-[11.600px] text-[#9a9a9a]">Type a command</div>
  </>
);

const SB: React.FC<{ on?: boolean; children?: React.ReactNode; w?: number }> = ({ on, children, w = 22 }) => (
  <div style={{ width: w }} className={`h-[22px] shrink-0 flex items-center justify-center border-r border-[#777] ${on ? 'bg-[linear-gradient(#b6dde6,#8fc2d0)]' : 'bg-[linear-gradient(#b0b0b0,#8e8e8e)]'}`}>
    {children}
  </div>
);

const sbi = (d: React.ReactNode) => (
  <svg width="18" height="18" viewBox="0 0 18 18" fill="none" stroke="#222" className="shrink-0">{d}</svg>
);

const StatusBar = () => (
  <div className="h-[27px] flex items-start pt-[2px] border-t border-[#111] bg-[linear-gradient(#6a6a6a,#8a8a8a_40%,#4c4c4c)] text-[11.500px] text-[#111] font-['Liberation_Sans',sans-serif]">
    <div className="w-[113px] h-[22px] flex items-center shrink-0 tracking-[-0.45px]">22.6985, 0.0000</div>
    <SB>{sbi(<><path d="M9 2v14M2 9h14M6 6h6v6H6z" /><rect x="12" y="12" width="4" height="4" fill="#fff" stroke="#1b6a96" /></>)}</SB>
    <SB>{sbi(<path d="M4 5h10M4 8h10M4 11h10M4 14h10" strokeDasharray="1 1.500" />)}</SB>
    <SB>{sbi(<path d="M2 2h14v14H2zM2 5.500h14M2 9h14M2 12.500h14M5.500 2v14M9 2v14M12.500 2v14" />)}</SB>
    <SB on>{sbi(<path d="M4 1v15h13M4 10h7v6" stroke="#14536f" />)}</SB>
    <SB>{sbi(<><circle cx="9" cy="9" r="5" /><path d="M4 14L14 5M4 14h12" /></>)}</SB>
    <SB on>{sbi(<><rect x="3" y="3" width="13" height="13" fill="#eaf6fa" stroke="#14536f" /><rect x="1" y="1" width="4" height="4" fill="#fff" stroke="#c96a2a" /></>)}</SB>
    <SB>{sbi(<><path d="M3 6l3-3h10v10l-3 3H3z" fill="#dfe5e7" /><circle cx="3" cy="16" r="2" stroke="#c96a2a" fill="#fff" /></>)}</SB>
    <SB on>{sbi(<path d="M2 15h14M2 15l11-9" stroke="#222" strokeWidth={1.200} />)}</SB>
    <SB>{sbi(<><path d="M3 2v14h14M3 16L13 6" /><path d="M15 2l-4 5h3l-3 5" stroke="#e0a63c" strokeWidth={1.400} /></>)}</SB>
    <SB on>{sbi(<><path d="M5 4v10M2 7h7" strokeWidth={1.400} /><rect x="8" y="10" width="7" height="3" /></>)}</SB>
    <SB>{sbi(<path d="M9 3v12M2 9h14" stroke="#111" strokeWidth={2} />)}</SB>
    <SB on><div className="w-[17px] h-[17px] border border-[#14536f] bg-[repeating-conic-gradient(#7fb2d0_0_25%,#b9d8e6_0_50%)] bg-[length:4px_4px]" /></SB>
    <SB>{sbi(<path d="M5 3h8v12H5zM7 6h4M7 9h4M7 12h4" fill="#fff" />)}</SB>
    <SB>{sbi(<><path d="M4 1v7M1 4h7" /><rect x="7" y="7" width="9" height="9" fill="#8fc27a" stroke="#2d6a2d" /></>)}</SB>
    <SB>{sbi(<path d="M6 2h6v4h4v6h-4v4H6v-4H2V6h4z" fill="#eee" />)}</SB>

    <div className="w-[420px] shrink-0" />
    <SB w={42}>MODEL</SB>
    <SB>{sbi(<><rect x="3" y="2" width="12" height="12" fill="#eee" /><path d="M5 12V5l6 7z" /><path d="M1 16h16" strokeWidth={1.600} /></>)}</SB>
    <SB>{sbi(<><rect x="2" y="3" width="6" height="8" fill="#eee" /><rect x="10" y="3" width="6" height="8" fill="#eee" /><path d="M1 14h16" strokeWidth={1.600} /></>)}</SB>
    <div className="w-[12px] h-[22px] shrink-0 bg-[#777]" />
    <SB w={52}>
      <div className="flex items-center gap-[2px]">
        {sbi(<path d="M9 2v7M9 9l-6 6M9 9l6 6M6 15l3-2 3 2" strokeWidth={1.500} />)}
        <span className="-ml-[2px]">1:1</span><Caret c="#111" w={6} />
      </div>
    </SB>
    <SB>{sbi(<><path d="M7 2v7l-5 6M7 9l5 6" strokeWidth={1.500} stroke="#eee" /><path d="M13 9l3 3-3 3" stroke="#e0a63c" strokeWidth={2} /></>)}</SB>
    <SB>{sbi(<path d="M9 2v7l-5 6M9 9l5 6" strokeWidth={1.500} stroke="#b8b8b8" />)}</SB>
    <div className="w-[5px] shrink-0" />
    <SB>{sbi(<><circle cx="9" cy="9" r="3" /><circle cx="9" cy="9" r="6" strokeDasharray="3 1.500" strokeWidth={2} /></>)}</SB>
    <SB>{sbi(<><rect x="2" y="8" width="10" height="8" fill="#f5f5f5" /><path d="M9 8V4a3 3 0 016 0v3" strokeWidth={1.500} /></>)}</SB>
    <SB>{sbi(<path d="M5 12V6l2-2 4 1 3 3-1 5-3 2z" fill="#ccc" stroke="#666" />)}</SB>
    <div className="w-[6px] shrink-0" />
    <div className="w-[24px] h-[22px] shrink-0 flex items-center justify-center bg-[#c9c2a8] border border-[#777]">
      <svg width="14" height="19" viewBox="0 0 14 19" fill="#e8dc5c" stroke="#7a6c20" className="shrink-0"><path d="M7 1a6 6 0 00-3 11v3h6v-3A6 6 0 007 1z" /><path d="M4 17h6" /></svg>
    </div>
  </div>
);

const App: React.FC = () => {
  return (
    <div className="relative w-[1152px] h-[720px] overflow-hidden bg-[#1f2630] font-['Open_Sans','Noto_Sans',sans-serif] tracking-[-0.15px]">
      <TitleBar />
      <TabBar />
      <Ribbon />
      <div className="h-[7px] border-t border-[#e8e8e8] bg-[linear-gradient(#8a8a8a,#6e6e6e_70%,#22262c)]" />
      <Viewport />
      <LayoutTabs />
      <CommandArea />
      <StatusBar />

      {/* channel watermark burned into the video */}
      <div className="absolute left-[632px] top-[629px] whitespace-nowrap font-['DejaVu_Sans',sans-serif] font-bold text-[27.500px] leading-[36px] tracking-normal text-[#f0f0f0]">
        www.youtube.com/ <span className="text-[#1d4480]">CAD</span><span className="text-[#c0101a]">CAM</span><span className="text-[#3f6f22] tracking-[-0.8px]">Tutorials</span>
      </div>

      {/* subtitle, the commas come from the TC font because they sit centred there */}
      <div className="absolute left-[92px] top-[593px] whitespace-nowrap font-['Noto_Sans_CJK_SC',sans-serif] text-[41.200px] leading-[58px] tracking-normal text-white [-webkit-text-stroke:5px_#2b2f38] [paint-order:stroke_fill]">
        由hotspring个人翻译<span className="font-['Noto_Sans_CJK_TC',sans-serif]">，</span>用爱发电<span className="font-['Noto_Sans_CJK_TC',sans-serif]">，</span>仅供学习交流使用
      </div>
    </div>
  );
};

export default App;
